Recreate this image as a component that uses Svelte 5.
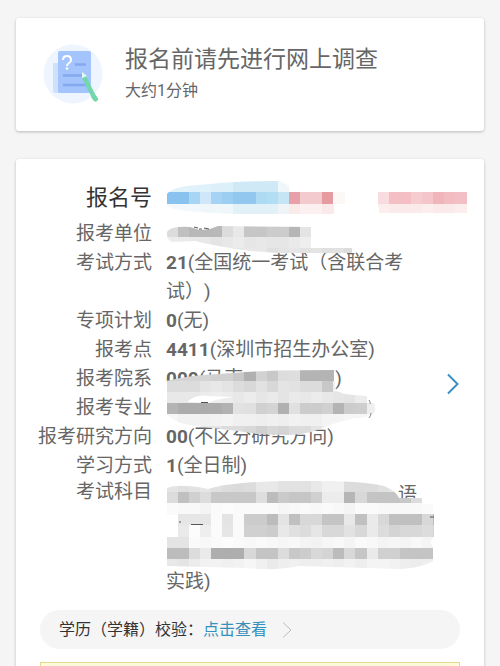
<script lang="ts">
    type Block = { row: number; col: number; colors: string[] };

    const size = 11.1;
    const left = 166.7;
    const top = 180.3;

    const grays = (row: number, col: number, list: string): Block => ({
        row,
        col,
        colors: list.split(" ").map((c) => "#" + c + c + c),
    });

    const hues = (row: number, col: number, list: string): Block => ({
        row,
        col,
        colors: list.split(" ").map((c) => "#" + c),
    });

    const numberBlocks: Block[] = [
        hues(0, 0, "e2f2fa e2f2fa dff1fa dff1fa dcf0f9 dcf0f9 cfeaf6 cfeaf6 cfeaf6 cfeaf6 eff7fa"),
        hues(1, 0, "89c2ef 89c2ef a9d5f4 cfe7f8 a6d2f3 9ccef2 92c8f0 92c8f0 addbf3 b2def3 c5e5f5 e8a0a8 f3cbcf f3cbcf e69ba0 fbf8f5"),
        hues(2, 0, "f2f8fb f2f8fb f2f8fb f0f7fa f0f7fa f0f7fa e2f1f8 e2f1f8 e2f1f8 e2f1f8 f0f4f7 fbeaea fcf1f0 fcf1f0 fbeaea"),
        hues(1, 19, "f8dcdf f3bfc4 f3bfc4 f5cdd1 f4c5ca f0b5bb f2bcc1 f2bfc4"),
        hues(2, 19, "fceeed fbeaea fbeaea fbeaea fceeed fbeaea fbeaea fceeed"),
    ];

    const unitBlocks: Block[] = [
        grays(4, 0, "dc c0 b8 b8 b8 dc e8 c6 c6 cc cc b6 e4"),
        grays(5, 0, "ec ea e8 e8 e4 e8 ec e6 e8 e6 e6 ea ee"),
        grays(6, 0, "fa f4 f0 ee e8 e4 e6 e8 e8 e0 e4 e6 e2 e4 e0 e2 dc"),
    ];

    const majorBlocks: Block[] = [
        grays(17, 0, "d4 d4 d4 d4 d0 d0 c8 b0 d2 c8 dc de b4 b4 b4"),
        grays(18, 0, "dc dc dc e4 e8 e4 dc d8 e2 d8 e4 e2 dc dc c8 f0"),
        grays(19, 0, "e8 e8 e8 ec ee ec e8 ec e6 ea e4 ea e8 ec e8 e6 e4 ec"),
        grays(20, 0, "b4 ac ac ac ac b2 e2 e0 d0 d4 b0 e0 cc cc d0 b4 cc ce ee"),
        grays(21, 0, "f6 f2 f2 f0 f2 f4 f0 f0 ee f0 ee f2 f0 f0 f4 f4 f6 f6 f8"),
        grays(22, 0, "f8 f8 f0 e6 e4 dc dc d8 d0 d8 d4 dc dc e4 ee f4"),
    ];

    const subjectBlocks: Block[] = [
        grays(27, 0, "e4 e0 e2 e6 e0 dc da dc e8 e8 e2 e2 e2 e8 f0 f0 dc dc dc e0 e4"),
        grays(28, 0, "dc c0 d0 dc c8 c8 c8 c8 de bc ca c6 c6 d0 ec ec b6 d8 c4 c4 c4 c8 dc"),
        grays(29, 0, "fa f8 f8 f4 fa fc fa fa fa fa f6 f8 fa f8 fa f8 f4 fa fa f8 f8 f8 f8 fa"),
        grays(30, 1, "e6 e6 e6 fb e4 fa cc cc bc e4 c0 d8 d8 c4 c4 e8 c0 ea d8 c0 c0 c0 d8 bc"),
        grays(31, 1, "ea fc ee fb e6 fa d0 d0 cc e8 e0 dc e6 d8 d8 e2 d8 ea dc d4 d8 d8 dc d4"),
        grays(32, 0, "e4 e4 fa f8 fa fc fa f8 fa f8 f6 f8 f4 f2 f6 f8 f4 fa f8 f4 f6 f4 f8 f4"),
        grays(33, 0, "bc bc dc ea ae ae ae d8 c4 c4 dc c8 cc d8 d4 bc d8 c6 ea d0 d0 c4 c4 c4"),
        grays(34, 0, "e8 e4 ec f2 f2 f0 f2 f6 f0 ea ee f0 ee ee f0 ee f2 ee f4 f4 f2 ee ec ee"),
    ];

    const smears = [
        {
            id: "number",
            path: "M166 194Q172 185 198 184Q235 180 280 180L289 185L301 191H467V212H379V205H348L333 213H240Q170 211 166 204Z",
            blocks: numberBlocks,
        },
        {
            id: "unit",
            path: "M167 231Q170 225 190 226L200 229L210 228L218 225L311 226V246H352V252H278L250 250Q215 245 195 240L172 241Q166 238 167 231Z",
            blocks: unitBlocks,
        },
        {
            id: "major",
            path: "M166 380Q190 374 220 373Q255 369 335 369V389L344 393L366 395Q377 402 375 410Q372 417 355 417L332 423Q313 433 290 434Q260 434 238 430L195 425Q172 422 166 411Z",
            blocks: majorBlocks,
        },
        {
            id: "subject",
            path: "M167 487Q180 482 208 488Q230 481 285 480Q360 479 384 485Q396 490 399 497H423V503H434V536Q428 541 434 547V560Q420 567 400 568L300 565Q275 570 245 567L166 565Z",
            blocks: subjectBlocks,
        },
    ];
</script>

<main>
    <button type="button" class="card survey">
        <svg viewBox="0 0 60 60" aria-hidden="true">
            <circle cx="30" cy="30" r="29.5" fill="#eef5fe" />
            <path d="M10 19h7v30h-5q-2 0-2-2z" fill="#cfe0fd" />
            <rect x="15" y="7" width="33" height="42" rx="2" fill="#a3c4fc" />
            <path
                d="M32 20.500h11M20 31.500h22M20 41h23"
                stroke="#84a9ee"
                stroke-width="2.500"
            />
            <path
                d="M20 16q0-4 4-4t4 4q0 2-2.500 3.500Q24 20.500 24 22"
                fill="none"
                stroke="#fff"
                stroke-width="2"
            />
            <circle cx="24" cy="24.500" r="1.300" fill="#fff" />
            <path d="M41 33l10 20" stroke="#72d8a9" stroke-width="4.500" />
            <path d="M51 53l1.500 2" stroke="#72d8a9" stroke-width="5" stroke-linecap="round" />
            <path d="M39 34v-6l5 4z" fill="#e5f8f0" />
        </svg>
        <span class="survey-text">
            <span class="survey-title">报名前请先进行网上调查</span>
            <span class="survey-time">大约1分钟</span>
        </span>
    </button>

    <section class="card">
        <div class="record">
            <dl>
                <dt class="number">报名号</dt>
                <dd class="number"></dd>
                <dt>报考单位</dt>
                <dd></dd>
                <dt>考试方式</dt>
                <dd><b>21</b>(全国统一考试（含联合考试）)</dd>
                <dt>专项计划</dt>
                <dd><b>0</b>(无)</dd>
                <dt>报考点</dt>
                <dd><b>4411</b>(深圳市招生办公室)</dd>
                <dt>报考院系</dt>
                <dd><b>000</b>(马克<span class="gap school"></span>)</dd>
                <dt>报考专业</dt>
                <dd></dd>
                <dt>报考研究方向</dt>
                <dd><b>00</b>(不区分研究方向)</dd>
                <dt>学习方式</dt>
                <dd><b>1</b>(全日制)</dd>
                <dt class="subjects">考试科目</dt>
                <dd class="subjects">
                    <span class="gap line"></span>语<br />
                    <br />
                    <br />
                    实践)
                </dd>
            </dl>
            <a class="more" href="#detail" aria-label="查看">
                <svg viewBox="0 0 14 24" aria-hidden="true">
                    <path d="M2 2.500L11.500 12L2 21.500" />
                </svg>
            </a>
        </div>

        <svg class="mosaic" viewBox="16 158 468 420" aria-hidden="true">
            <defs>
                {#each smears as smear}
                    <clipPath id={smear.id}>
                        <path d={smear.path} />
                    </clipPath>
                {/each}
            </defs>
            {#each smears as smear}
                <g clip-path="url(#{smear.id})" shape-rendering="crispEdges">
                    {#each smear.blocks as block}
                        {#each block.colors as color, i}
                            <rect
                                x={left + (block.col + i) * size}
                                y={top + block.row * size}
                                width={size + 0.3}
                                height={size + 0.3}
                                fill={color}
                            />
                        {/each}
                    {/each}
                </g>
            {/each}
            <path d="M187 401Q197 393 207 395L233 396Q215 398 208 402Z" fill="#fff" />
            <path
                d="M194 226l4 1M199 228h3M204 227l5 1M180 520v2M191 523.500h12M430 516h4M201 401.500h7"
                stroke="#555"
                fill="none"
            />
            <path d="M369 399q2 3 1 4M371 412q0 3-2 5" stroke="#888" fill="none" />
        </svg>

        <div class="check">
            <span>学历（学籍）校验：</span>
            <a href="#check">点击查看</a>
            <svg viewBox="0 0 10 18" aria-hidden="true">
                <path d="M1 1.500L9 9L1 16.500" />
            </svg>
        </div>
        <div class="notice"></div>
    </section>
</main>

<style>
    :global(body) {
        margin: 0;
        background: #f5f5f5;
    }

    main {
        box-sizing: border-box;
        height: 100vh;
        overflow: hidden;
        padding: 18px 16px 0;
        font-family: Roboto, "Noto Sans CJK SC", sans-serif;
        text-spacing-trim: space-all;
        color: #666;
    }

    .card {
        position: relative;
        background: #fff;
        border-radius: 3px;
        box-shadow: 0 1px 3px rgba(0, 0, 0, 0.25);
    }

    .survey {
        display: flex;
        align-items: center;
        gap: 22px;
        width: 100%;
        padding: 24px 27px 26px;
        margin-bottom: 28px;
        border: none;
        font-family: inherit;
        color: inherit;
        text-align: left;
        cursor: pointer;
    }

    .survey svg {
        width: 60px;
        height: 60px;
    }

    .survey-text {
        display: flex;
        flex-direction: column;
    }

    .survey-title {
        font-size: 23px;
        line-height: 35px;
    }

    .survey-time {
        font-size: 16px;
        line-height: 28px;
    }

    .record {
        display: flex;
        align-items: center;
        padding: 20px 24px 14px 22px;
    }

    dl {
        flex: 1;
        display: grid;
        grid-template-columns: max-content 1fr;
        column-gap: 14px;
        margin: 0;
        font-size: 19px;
        line-height: 29px;
    }

    dt {
        text-align: right;
    }

    dd {
        margin: 0;
    }

    dt.number {
        padding: 4px 0 7px;
        font-size: 22px;
        color: #333;
    }

    dt.subjects {
        line-height: 24px;
    }

    .gap {
        display: inline-block;
    }

    .school {
        width: 92px;
    }

    .line {
        width: 232px;
    }

    .more {
        display: flex;
        justify-content: flex-end;
        width: 26px;
        margin-bottom: 8px;
    }

    .more svg {
        width: 14px;
        height: 24px;
    }

    .more path {
        fill: none;
        stroke: #3a8fc4;
        stroke-width: 2;
    }

    .mosaic {
        position: absolute;
        top: 0;
        left: 0;
        width: 468px;
        height: 420px;
        pointer-events: none;
    }

    .check {
        display: flex;
        align-items: center;
        margin: 0 24px 13px;
        padding: 0 19px;
        border-radius: 20px;
        background: #f5f5f5;
        font-size: 16px;
        line-height: 39px;
        color: #333;
    }

    .check a {
        color: #3291bd;
        text-decoration: none;
    }

    .check svg {
        width: 10px;
        height: 18px;
        margin-left: 15px;
    }

    .check path {
        fill: none;
        stroke: #bbb;
    }

    .notice {
        min-height: 60px;
        margin: 0 24px;
        border: 1px solid #e6d98f;
        background: #fffbd9;
    }
</style>
